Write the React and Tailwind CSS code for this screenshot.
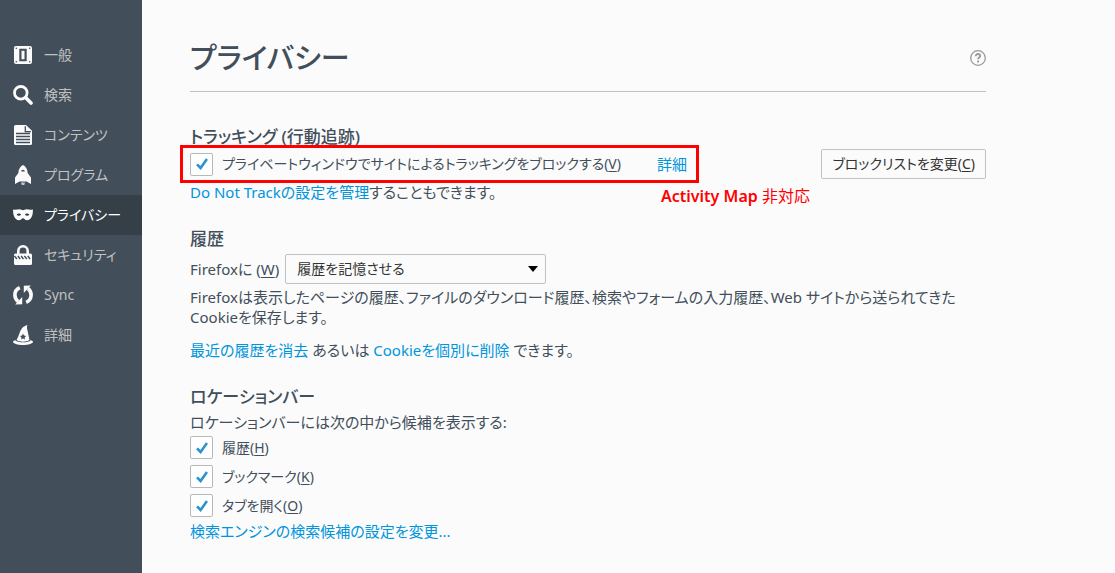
import React, { useState } from "react";

const icons = {
  general: (
    <svg viewBox="0 0 20 20" className="size-5 shrink-0" fill="currentColor" aria-hidden="true">
      <path
        fillRule="evenodd"
        d="M3 1h14a2 2 0 0 1 2 2v14a2 2 0 0 1-2 2H3a2 2 0 0 1-2-2V3a2 2 0 0 1 2-2Zm3.300 2.800v12.400h7.400V3.800H6.300Zm2.200 2h3v8.400h-3V5.800ZM3.300 2.500a.8.8 0 1 0 0 1.600.8.8 0 0 0 0-1.600Zm13.400 0a.8.8 0 1 0 0 1.600.8.8 0 0 0 0-1.600ZM3.300 15.900a.8.8 0 1 0 0 1.600.8.8 0 0 0 0-1.600Zm13.400 0a.8.8 0 1 0 0 1.600.8.8 0 0 0 0-1.600Z"
      />
    </svg>
  ),
  search: (
    <svg viewBox="0 0 20 20" className="size-5 shrink-0" fill="none" stroke="currentColor" aria-hidden="true">
      <circle cx="7.800" cy="7.800" r="6.300" strokeWidth="2.800" />
      <path d="m12.800 12.800 5.200 5.200" strokeWidth="3.600" strokeLinecap="round" />
    </svg>
  ),
  content: (
    <svg viewBox="0 0 20 20" className="size-5 shrink-0" aria-hidden="true">
      <path fill="currentColor" d="M2.500 0H13l6 5.800v12.700a1.500 1.500 0 0 1-1.500 1.500h-15A1.500 1.500 0 0 1 1 18.500v-17A1.500 1.500 0 0 1 2.500 0Z" />
      <path stroke="#424f5a" strokeWidth="1.300" fill="none" d="M12.300 1.200v5.400h5.600M3 8.500h14M3 11.500h14M3 14.500h14M3 17.500h14" />
    </svg>
  ),
  programs: (
    <svg viewBox="0 0 20 20" className="size-5 shrink-0" fill="currentColor" aria-hidden="true">
      <path
        fillRule="evenodd"
        d="M10 0c2.800 1.500 4.600 4.200 4.600 8L18 12.500V19l-4.500-2.500h-7L2 19v-6.500L5.400 8C5.400 4.200 7.200 1.500 10 0Zm0 4.800c-1.100 0-1.800.8-1.800 1.800h3.600c0-1-.7-1.800-1.800-1.800Z"
      />
      <path d="M8 17.500h4L11.300 20H8.700Z" opacity=".7" />
    </svg>
  ),
  privacy: (
    <svg viewBox="0 0 20 20" className="size-5 shrink-0" fill="currentColor" aria-hidden="true">
      <path
        fillRule="evenodd"
        d="M0 4.500c2.500.7 4.500-.2 6.500-.2 1.500 0 2.400 1 3.500 1s2-1 3.500-1c2 0 4 .9 6.500.2-.3 2 0 3.800-.8 6-.9 2.900-2.900 4.800-5.200 4.800-2 0-2.800-2-4-2s-2 2-4 2c-2.300 0-4.300-1.900-5.200-4.800C0 8.300.3 6.500 0 4.500ZM3.700 9.300c.8 1.900 3 2 4.400.5-.8-1.600-2.900-1.700-4.400-.5Zm8.200.5c1.400 1.500 3.600 1.400 4.400-.5-1.500-1.200-3.600-1.100-4.400.5Z"
      />
    </svg>
  ),
  security: (
    <svg viewBox="0 0 20 20" className="size-5 shrink-0" aria-hidden="true">
      <path d="M5.300 10V6a4.700 4.700 0 0 1 9.400 0v4" fill="none" stroke="currentColor" strokeWidth="2.600" />
      <rect x="1" y="8.500" width="18" height="11.500" rx="1.500" fill="currentColor" />
      <path
        stroke="#424f5a"
        strokeWidth="1.400"
        d="m1.500 11 2.400 3M4.800 11l2.400 3M8.100 11l2.400 3M11.400 11l2.400 3M14.700 11l2.400 3"
      />
    </svg>
  ),
  sync: (
    <svg viewBox="0 0 20 20" className="size-5 shrink-0" aria-hidden="true">
      <path
        d="M6.800 2.700C3.600 4.100 1.900 6.900 1.900 10c0 2.900 1.200 5 3.200 6.500M13.200 17.300c3.200-1.400 4.900-4.200 4.900-7.300 0-2.900-1.200-5-3.200-6.500"
        fill="none"
        stroke="currentColor"
        strokeWidth="3.600"
      />
      <path fill="currentColor" d="m2.200 19.600 7-.3V12ZM17.800.4l-7 .3V8Z" />
    </svg>
  ),
  advanced: (
    <svg viewBox="0 0 20 20" className="size-5 shrink-0" fill="currentColor" aria-hidden="true">
      <path
        fillRule="evenodd"
        d="M14.500 0c-.8 1.800-.6 3.500 0 5.500l2 9.500c-3.500 2.200-9.500 2.200-13 0C6 11 6.500 6 9 3.200 10.500 1.500 12.500.8 14.500 0ZM10 8.600l-.9 2-2.100.3 1.500 1.500-.3 2.100 1.900-1 1.900 1-.4-2.100 1.500-1.500-2.100-.3Z"
      />
      <path d="M2.500 15.200C4 18 16 18 17.500 15.200c1.500.3 2.500.9 2.500 1.600 0 1.800-4.500 3.200-10 3.200S0 18.600 0 16.800c0-.7 1-1.300 2.500-1.600Z" />
    </svg>
  ),
};

const categories = [
  { id: "general", label: "一般" },
  { id: "search", label: "検索" },
  { id: "content", label: "コンテンツ" },
  { id: "programs", label: "プログラム" },
  { id: "privacy", label: "プライバシー" },
  { id: "security", label: "セキュリティ" },
  { id: "sync", label: "Sync" },
  { id: "advanced", label: "詳細" },
];

function Key({ children }) {
  return (
    <>
      (<span className="underline underline-offset-2">{children}</span>)
    </>
  );
}

function TextLink({ children }) {
  return (
    <a href="#" className="text-[#0095dd] hover:underline">
      {children}
    </a>
  );
}

function Checkbox({ id, children }) {
  const [checked, setChecked] = useState(true);
  return (
    <div className="flex items-center gap-[9px]">
      <span className="grid size-[23px] shrink-0 place-items-center">
        <input
          id={id}
          type="checkbox"
          checked={checked}
          onChange={(e) => setChecked(e.target.checked)}
          className="peer col-start-1 row-start-1 size-full appearance-none rounded-xs border border-[#b8b8b8] bg-white"
        />
        <svg
          viewBox="0 0 12 12"
          className="pointer-events-none invisible col-start-1 row-start-1 size-3 peer-checked:visible"
          fill="none"
          stroke="#2a92cf"
          strokeWidth="2.600"
          aria-hidden="true"
        >
          <path d="M1 6.300 4.600 10 11 1" />
        </svg>
      </span>
      <label htmlFor={id} className="text-sm leading-5">
        {children}
      </label>
    </div>
  );
}

function Heading({ children }) {
  return <h2 className="text-[17px] leading-6 font-medium">{children}</h2>;
}

export default function App() {
  return (
    <div className="flex min-h-screen bg-[#fbfbfb] font-['Noto_Sans','Noto_Sans_CJK_JP',sans-serif] text-[15px] leading-5 text-[#424f5a] [font-feature-settings:'palt']">
      <nav className="w-[142px] shrink-0 bg-[#424f5a] pt-[35px] text-sm text-[#c1c1c1]">
        <ul>
          {categories.map(({ id, label }) => (
            <li key={id}>
              <a
                href={"#" + id}
                aria-current={id === "privacy" ? "page" : undefined}
                className="flex h-10 items-center gap-[11px] pl-[13px] aria-[current=page]:bg-[#343f48] aria-[current=page]:text-white"
              >
                <span className="text-[#fbfbfb]">{icons[id]}</span>
                <span className="whitespace-nowrap">{label}</span>
              </a>
            </li>
          ))}
        </ul>
      </nav>

      <main className="min-w-0 flex-1 px-12 pt-[38px] pb-7">
        <div className="max-w-[796px]">
          <header className="flex items-center justify-between border-b border-[#c1c1c1] pb-[13px]">
            <h1 className="text-[29px] leading-10 font-medium">プライバシー</h1>
            <button type="button" aria-label="ヘルプ" className="text-[#999]">
              <svg viewBox="0 0 16 16" className="size-4" fill="none" stroke="currentColor" aria-hidden="true">
                <circle cx="8" cy="8" r="7.300" strokeWidth="1.300" />
                <path d="M5.800 6.200c0-1.400.9-2.200 2.200-2.200s2.200.8 2.200 2c0 1.500-2.100 1.600-2.100 3.300M8.100 10.600v1.800" strokeWidth="1.800" />
              </svg>
            </button>
          </header>

          <section className="pt-[33px]">
            <Heading>トラッキング (行動追跡)</Heading>
            <div className="flex items-center justify-between">
              <div className="relative flex items-center gap-9">
                <Checkbox id="tracking">
                  プライベートウィンドウでサイトによるトラッキングをブロックする
                  <Key>V</Key>
                </Checkbox>
                <TextLink>詳細</TextLink>
                <div className="pointer-events-none absolute -top-2 -right-3 -bottom-[7px] -left-[10px] border-3 border-[#ff0000]" />
                <p className="absolute top-full left-[471px] mt-2 text-base leading-6 whitespace-nowrap text-[#ff0000]">
                  <strong className="font-semibold">Activity Map</strong> 非対応
                </p>
              </div>
              <button type="button" className="h-[30px] rounded-xs border border-[#c1c1c1] px-[10px] text-sm text-[#333]">
                ブロックリストを変更
                <Key>C</Key>
              </button>
            </div>
            <p className="mt-[3px]">
              <TextLink>Do Not Trackの設定を管理</TextLink>することもできます。
            </p>
          </section>

          <section className="mt-[25px]">
            <Heading>履歴</Heading>
            <div className="mt-[3px] flex items-center gap-[6px]">
              <label htmlFor="history">
                Firefoxに <Key>W</Key>
              </label>
              <div className="relative">
                <select
                  id="history"
                  className="h-[30px] w-[261px] appearance-none rounded-xs border border-[#c1c1c1] bg-[#fbfbfb] px-[11px] text-sm text-[#333]"
                >
                  <option>履歴を記憶させる</option>
                </select>
                <svg viewBox="0 0 10 6" className="pointer-events-none absolute top-3 right-2 h-[6px] w-[10px]" aria-hidden="true">
                  <path d="M0 0h10L5 6Z" fill="#000" />
                </svg>
              </div>
            </div>
            <p className="mt-[3px]">
              Firefoxは表示したページの履歴、ファイルのダウンロード履歴、検索やフォームの入力履歴、Web サイトから送られてきた Cookieを保存します。
            </p>
            <p className="mt-[13px]">
              <TextLink>最近の履歴を消去</TextLink> あるいは <TextLink>Cookieを個別に削除</TextLink> できます。
            </p>
          </section>

          <section className="mt-[25px]">
            <Heading>ロケーションバー</Heading>
            <p className="mt-[3px]">ロケーションバーには次の中から候補を表示する:</p>
            <div className="my-1 flex flex-col gap-[6px]">
              <Checkbox id="loc-history">
                履歴
                <Key>H</Key>
              </Checkbox>
              <Checkbox id="loc-bookmarks">
                ブックマーク
                <Key>K</Key>
              </Checkbox>
              <Checkbox id="loc-tabs">
                タブを開く
                <Key>O</Key>
              </Checkbox>
            </div>
            <p>
              <TextLink>検索エンジンの検索候補の設定を変更...</TextLink>
            </p>
          </section>
        </div>
      </main>
    </div>
  );
}
